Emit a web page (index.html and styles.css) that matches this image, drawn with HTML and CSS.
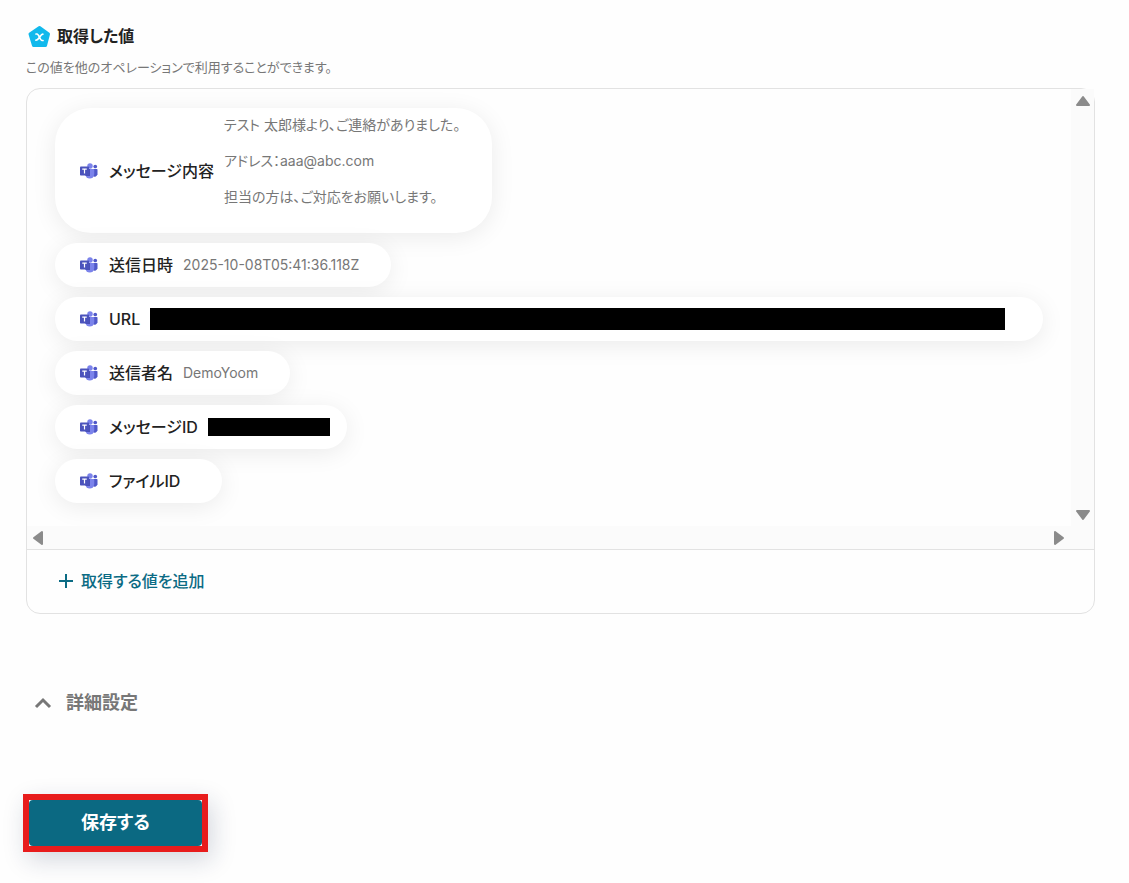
FILE: index.html
```html
<!DOCTYPE html>
<html lang="ja">
<head>
    <meta charset="UTF-8">
    <meta name="viewport" content="width=device-width, initial-scale=1.0">
    <title>取得した値</title>
    <link rel="stylesheet" href="styles.css">
</head>
<body>

<!-- Teams logo, reused in every row -->
<svg class="sprite" aria-hidden="true">
    <symbol id="teams" viewBox="0 0 36 32">
        <circle cx="30.500" cy="7" r="3.700" fill="#5059c9"/>
        <path d="M26 12h7.500a1.500 1.500 0 0 1 1.500 1.500v9a6 6 0 0 1-9 4z" fill="#5059c9"/>
        <circle cx="20" cy="6" r="5.500" fill="#7b83eb"/>
        <path d="M12 12h15a1.500 1.500 0 0 1 1.500 1.500V22a9 9 0 0 1-18 0v-8.500A1.500 1.500 0 0 1 12 12z" fill="#7b83eb"/>
        <path d="M11 12h9v14h-8.500a9 9 0 0 1-1-4z" fill="#4a50b8"/>
        <rect x="0" y="7" width="18" height="18" rx="1.500" fill="#4b53bc"/>
        <path d="M4.500 11h9v2.300h-3.300V21H7.800v-7.700H4.500z" fill="#fff"/>
    </symbol>
</svg>

<main class="page">
    <section>
        <h2 class="title">
            <svg class="title-icon" viewBox="0 0 24 24" aria-hidden="true">
                <path d="M12.500 3.500 21.500 10 18.500 21.500H6.500L3 10z" fill="#12b9ec" stroke="#12b9ec" stroke-width="3" stroke-linejoin="round"/>
                <path d="M9 10h1c2 0 3 6.500 5 6.500h1M15.800 10.200c-2.300 0-4 6-6.800 6" fill="none" stroke="#fff" stroke-width="1.700" stroke-linecap="round"/>
            </svg>
            取得した値
        </h2>
        <p class="description">この値を他のオペレーションで利用することができます。</p>

        <div class="panel">
            <div class="scroller">
                <ul class="values">
                    <li class="value">
                        <svg class="teams"><use href="#teams"/></svg>
                        <span class="name">メッセージ内容</span>
                        <div class="message">
                            <p>テスト 太郎様より、ご連絡がありました。</p>
                            <p>アドレス：aaa@abc.com</p>
                            <p>担当の方は、ご対応をお願いします。</p>
                        </div>
                    </li>
                    <li class="value">
                        <svg class="teams"><use href="#teams"/></svg>
                        <span class="name">送信日時</span>
                        <span class="data">2025-10-08T05:41:36.118Z</span>
                    </li>
                    <li class="value url">
                        <svg class="teams"><use href="#teams"/></svg>
                        <span class="name">URL</span>
                        <span class="mask"></span>
                    </li>
                    <li class="value">
                        <svg class="teams"><use href="#teams"/></svg>
                        <span class="name">送信者名</span>
                        <span class="data">DemoYoom</span>
                    </li>
                    <li class="value message-id">
                        <svg class="teams"><use href="#teams"/></svg>
                        <span class="name">メッセージID</span>
                        <span class="mask"></span>
                    </li>
                    <li class="value">
                        <svg class="teams"><use href="#teams"/></svg>
                        <span class="name">ファイルID</span>
                        <span class="data"></span>
                    </li>
                </ul>
                <div class="bar-y">
                    <button type="button" class="arrow" aria-label="上へ"><svg viewBox="0 0 16 12"><path d="M8 2 14 10H2z"/></svg></button>
                    <button type="button" class="arrow" aria-label="下へ"><svg viewBox="0 0 16 12"><path d="M2 2h12L8 10z"/></svg></button>
                </div>
                <div class="bar-x">
                    <button type="button" class="arrow side" aria-label="左へ"><svg viewBox="0 0 12 16"><path d="M2 8 10 2v12z"/></svg></button>
                    <button type="button" class="arrow side" aria-label="右へ"><svg viewBox="0 0 12 16"><path d="M2 2 10 8 2 14z"/></svg></button>
                </div>
            </div>
            <div class="panel-footer">
                <button type="button" class="add">
                    <svg viewBox="0 0 16 16" aria-hidden="true"><path d="M8 1v14M1 8h14"/></svg>
                    取得する値を追加
                </button>
            </div>
        </div>
    </section>

    <button type="button" class="details" aria-expanded="false">
        <svg viewBox="0 0 18 12" aria-hidden="true"><path d="M2 10 9 3l7 7"/></svg>
        詳細設定
    </button>

    <div class="save-frame">
        <button type="submit" class="save">保存する</button>
    </div>
</main>

</body>
</html>
```

FILE: styles.css
```css
* {
    box-sizing: border-box;
}

body {
    margin: 0;
    background: #fefefe;
    color: #222;
    font-family: Inter, "Noto Sans CJK JP", sans-serif;
    font-feature-settings: "palt";
}

button {
    padding: 0;
    border: none;
    background: none;
    font: inherit;
    font-feature-settings: inherit;
    cursor: pointer;
}

svg {
    display: block;
    flex: none;
}

.sprite {
    position: absolute;
    width: 0;
    height: 0;
}

.page {
    padding: 24px 34px 32px 26px;
}

.title {
    display: flex;
    align-items: center;
    gap: 6px;
    margin: 0;
    padding-left: 1px;
    font-size: 16px;
    font-weight: 600;
    line-height: 24px;
}

.title-icon {
    width: 24px;
    height: 24px;
}

.description {
    margin: 9px 0 11px;
    color: #777;
    font-size: 13px;
    line-height: 20px;
}

.panel {
    border: 1px solid #e2e2e2;
    border-radius: 14px;
}

.scroller {
    display: grid;
    grid-template-columns: 1fr 23px;
    grid-template-rows: 1fr 23px;
    border-bottom: 1px solid #e2e2e2;
}

.values {
    display: flex;
    flex-direction: column;
    align-items: flex-start;
    gap: 10px;
    min-width: 0;
    margin: 0;
    padding: 19px 28px 23px;
    overflow: hidden;
    border-top-left-radius: 14px;
    list-style: none;
}

.value {
    display: flex;
    align-items: center;
    gap: 10px;
    max-width: 100%;
    min-height: 44px;
    padding: 0 32px 0 25px;
    border-radius: 36px;
    background: #fff;
    box-shadow: 0 4px 24px rgba(0, 0, 0, 0.08);
}

.teams {
    width: 18px;
    height: 16px;
    margin-right: 1px;
}

.name {
    flex: none;
    font-size: 16px;
    font-weight: 500;
    line-height: 24px;
}

.data,
.message {
    color: #777;
    font-size: 14px;
    line-height: 20px;
}

.message {
    padding: 7px 0 26px;
}

.message p {
    margin: 0;
}

.message p + p {
    margin-top: 16px;
}

/* masked values */
.mask {
    flex: 0 1 auto;
    background: #000;
}

.url {
    padding-right: 38px;
}

.url .mask {
    width: 857px;
    height: 22px;
}

.message-id {
    padding-right: 17px;
}

.message-id .mask {
    width: 122px;
    height: 18px;
}

.bar-y,
.bar-x {
    display: flex;
    justify-content: space-between;
    align-items: center;
    background: #fbfbfb;
}

.bar-y {
    flex-direction: column;
    padding: 6px 0 5px;
}

.bar-x {
    grid-column: 1 / 3;
    padding: 0 29px 0 5px;
}

.arrow svg {
    width: 16px;
    height: 12px;
    fill: #8b8b8b;
    stroke: #8b8b8b;
    stroke-width: 2;
    stroke-linejoin: round;
}

.side svg {
    width: 12px;
    height: 16px;
}

.panel-footer {
    padding: 19px 31px 20px;
}

.add {
    display: flex;
    align-items: center;
    gap: 7px;
    color: #0b6b84;
    font-size: 16px;
    font-weight: 500;
    line-height: 24px;
}

.add svg {
    width: 16px;
    height: 16px;
    fill: none;
    stroke: #0b6b84;
    stroke-width: 2;
}

.details {
    display: flex;
    align-items: center;
    gap: 14px;
    margin-top: 76px;
    padding-left: 8px;
    color: #777;
    font-size: 18px;
    font-weight: 600;
    line-height: 26px;
}

.details svg {
    width: 18px;
    height: 12px;
    fill: none;
    stroke: #777;
    stroke-width: 3;
}

.save-frame {
    width: fit-content;
    margin: 78px 0 0 -3px;
    border: 6px solid #e81c1c;
    box-shadow: 4px 8px 24px rgba(20, 40, 80, 0.18);
}

.save {
    display: block;
    padding: 10px 52px;
    border-radius: 4px;
    background: #0b6982;
    color: #fff;
    font-size: 18px;
    font-weight: 600;
    line-height: 26px;
}
```
